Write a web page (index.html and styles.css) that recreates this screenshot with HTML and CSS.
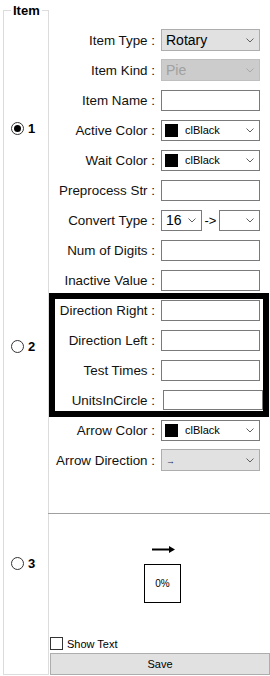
FILE: index.html
```html
<!DOCTYPE html>
<html lang="en">

<head>
    <meta charset="UTF-8">
    <meta name="viewport" content="width=device-width, initial-scale=1.0">
    <title>Item</title>
    <link rel="stylesheet" href="styles.css">
</head>

<body>
    <div class="window">
        <div class="group">
            <div class="group-title">Item</div>
            <label class="choice first"><input type="radio" name="mode" checked><span>1</span></label>
            <label class="choice second"><input type="radio" name="mode"><span>2</span></label>
            <label class="choice third"><input type="radio" name="mode"><span>3</span></label>
        </div>

        <div class="panel">
            <div class="fields">
                <div class="row">
                    <label>Item Type :</label>
                    <div class="combo grey"><span>Rotary</span><svg class="chev" width="8" height="5"><path d="M0.5 0.5 L4 4 L7.5 0.5" /></svg></div>
                </div>
                <div class="row">
                    <label>Item Kind :</label>
                    <div class="combo disabled"><span>Pie</span><svg class="chev" width="8" height="5"><path d="M0.5 0.5 L4 4 L7.5 0.5" /></svg></div>
                </div>
                <div class="row">
                    <label>Item Name :</label>
                    <input type="text">
                </div>
                <div class="row">
                    <label>Active Color :</label>
                    <div class="combo color"><i class="swatch"></i><span>clBlack</span><svg class="chev" width="8" height="5"><path d="M0.5 0.5 L4 4 L7.5 0.5" /></svg></div>
                </div>
                <div class="row">
                    <label>Wait Color :</label>
                    <div class="combo color"><i class="swatch"></i><span>clBlack</span><svg class="chev" width="8" height="5"><path d="M0.5 0.5 L4 4 L7.5 0.5" /></svg></div>
                </div>
                <div class="row">
                    <label>Preprocess Str :</label>
                    <input type="text">
                </div>
                <div class="row">
                    <label>Convert Type :</label>
                    <div class="convert">
                        <div class="combo small"><span>16</span><svg class="chev" width="8" height="5"><path d="M0.5 0.5 L4 4 L7.5 0.5" /></svg></div>
                        <span class="to">-&gt;</span>
                        <div class="combo small"><span></span><svg class="chev" width="8" height="5"><path d="M0.5 0.5 L4 4 L7.5 0.5" /></svg></div>
                    </div>
                </div>
                <div class="row">
                    <label>Num of Digits :</label>
                    <input type="text">
                </div>
                <div class="row">
                    <label>Inactive Value :</label>
                    <input type="text">
                </div>

                <div class="highlight">
                    <div class="row">
                        <label>Direction Right :</label>
                        <input type="text">
                    </div>
                    <div class="row">
                        <label>Direction Left :</label>
                        <input type="text">
                    </div>
                    <div class="row">
                        <label>Test Times :</label>
                        <input type="text">
                    </div>
                    <div class="row">
                        <label>UnitsInCircle :</label>
                        <input type="text" class="units">
                    </div>
                </div>

                <div class="row">
                    <label>Arrow Color :</label>
                    <div class="combo color"><i class="swatch"></i><span>clBlack</span><svg class="chev" width="8" height="5"><path d="M0.5 0.5 L4 4 L7.5 0.5" /></svg></div>
                </div>
                <div class="row">
                    <label>Arrow Direction :</label>
                    <div class="combo grey"><span class="mini-arrow">&rarr;</span><svg class="chev" width="8" height="5"><path d="M0.5 0.5 L4 4 L7.5 0.5" /></svg></div>
                </div>
            </div>

            <div class="divider"></div>

            <div class="preview">
                <svg class="big-arrow" width="24" height="9" viewBox="0 0 24 9">
                    <path d="M0 4.5 H20" stroke="#000" stroke-width="2" />
                    <path d="M17 1 L23 4.5 L17 8 Z" fill="#000" />
                </svg>
                <div class="gauge">0%</div>
            </div>

            <label class="check"><input type="checkbox"><span>Show Text</span></label>
            <button class="save">Save</button>
        </div>
    </div>
</body>
</html>
```

FILE: styles.css
```css
body {
    margin: 0;
    background: #fff;
    font-family: "Liberation Sans", Arial, sans-serif;
    font-size: 14px;
    color: #000;
}

.window {
    display: flex;
    align-items: flex-start;
    padding-left: 3px;
    width: 270px;
    box-sizing: border-box;
}

/* left group box */
.group {
    flex: none;
    width: 46px;
    height: 665px;
    margin-top: 10px;
    box-sizing: border-box;
    border: 1px solid #dcdcdc;
    display: flex;
    flex-direction: column;
    align-items: flex-start;
}

.group-title {
    margin: -8px 0 0 7px;
    padding: 0 2px;
    background: #fff;
    font-weight: bold;
    font-size: 13px;
    line-height: 15px;
}

.choice {
    display: flex;
    align-items: center;
    height: 14px;
    margin-left: 7px;
    font-weight: bold;
    font-size: 13px;
}

.choice.first {
    margin-top: 103px;
}

.choice.second {
    margin-top: 204px;
}

.choice.third {
    margin-top: 203px;
}

.choice input {
    appearance: none;
    margin: 0 4px 0 0;
    width: 13px;
    height: 13px;
    border: 1px solid #333;
    border-radius: 50%;
    box-sizing: border-box;
    display: flex;
    align-items: center;
    justify-content: center;
}

.choice input:checked::after {
    content: "";
    width: 7px;
    height: 7px;
    border-radius: 50%;
    background: #000;
}

/* right panel */
.panel {
    flex: 1;
    padding-top: 25px;
}

.row {
    display: grid;
    grid-template-columns: 106px 99px;
    column-gap: 6px;
    align-items: center;
    height: 30px;
}

.row label {
    text-align: right;
    white-space: nowrap;
    font-size: 13.4px;
    color: #111;
}

.row input[type="text"] {
    margin: 0;
    width: 99px;
    height: 21px;
    box-sizing: border-box;
    border: 1px solid #7a7a7a;
    font: inherit;
}

.highlight {
    margin: 0 3px 0 2px;
    outline: 6px solid #000;
    outline-offset: -4px;
}

.highlight .row {
    grid-template-columns: 104px 99px;
}

.highlight .row input.units {
    margin-left: 2px;
    width: 100px;
    height: 20px;
}

.combo {
    display: flex;
    align-items: center;
    height: 22px;
    padding: 0 5px 0 4px;
    box-sizing: border-box;
    border: 1px solid #7a7a7a;
    background: #fff;
}

.combo .chev {
    margin-left: auto;
    flex: none;
}

.chev path {
    fill: none;
    stroke: #606060;
    stroke-width: 1;
}

.combo.grey {
    background: #e1e1e1;
    border-color: #adadad;
}

.combo.disabled {
    background: #cccccc;
    border-color: #bfbfbf;
    color: #a0a0a0;
}

.combo.disabled .chev path {
    stroke: #a8a8a8;
}

.combo.color {
    height: 21px;
    font-size: 11px;
    padding-left: 3px;
}

.swatch {
    width: 13px;
    height: 13px;
    background: #000;
    margin-right: 7px;
}

.convert {
    display: flex;
    align-items: center;
}

.combo.small {
    width: 41px;
    height: 21px;
}

.to {
    width: 18px;
    text-align: center;
    font-size: 13px;
}

.mini-arrow {
    font-size: 9px;
    color: #1a2a5a;
    margin-top: 2px;
}

.divider {
    margin-top: 38px;
    margin-left: -1px;
    border-top: 1px solid #a0a0a0;
}

.preview {
    display: flex;
    flex-direction: column;
    align-items: flex-start;
    padding: 31px 0 0 95px;
}

.big-arrow {
    display: block;
    margin-left: 8px;
}

.gauge {
    margin-top: 10px;
    width: 37px;
    height: 39px;
    box-sizing: border-box;
    border: 1px solid #000;
    display: flex;
    align-items: center;
    justify-content: center;
    font-size: 10px;
}

.check {
    display: flex;
    align-items: center;
    margin: 34px 0 0 1px;
    height: 13px;
    font-size: 11px;
}

.check input {
    appearance: none;
    margin: 0 4px 0 0;
    width: 13px;
    height: 13px;
    border: 1px solid #333;
    box-sizing: border-box;
    background: #fff;
}

.save {
    display: block;
    margin: 3px 0 0 1px;
    width: 220px;
    height: 22px;
    box-sizing: border-box;
    border: 1px solid #adadad;
    background: #e1e1e1;
    font-family: "Liberation Sans", Arial, sans-serif;
    font-size: 11px;
    color: #000;
}
```
